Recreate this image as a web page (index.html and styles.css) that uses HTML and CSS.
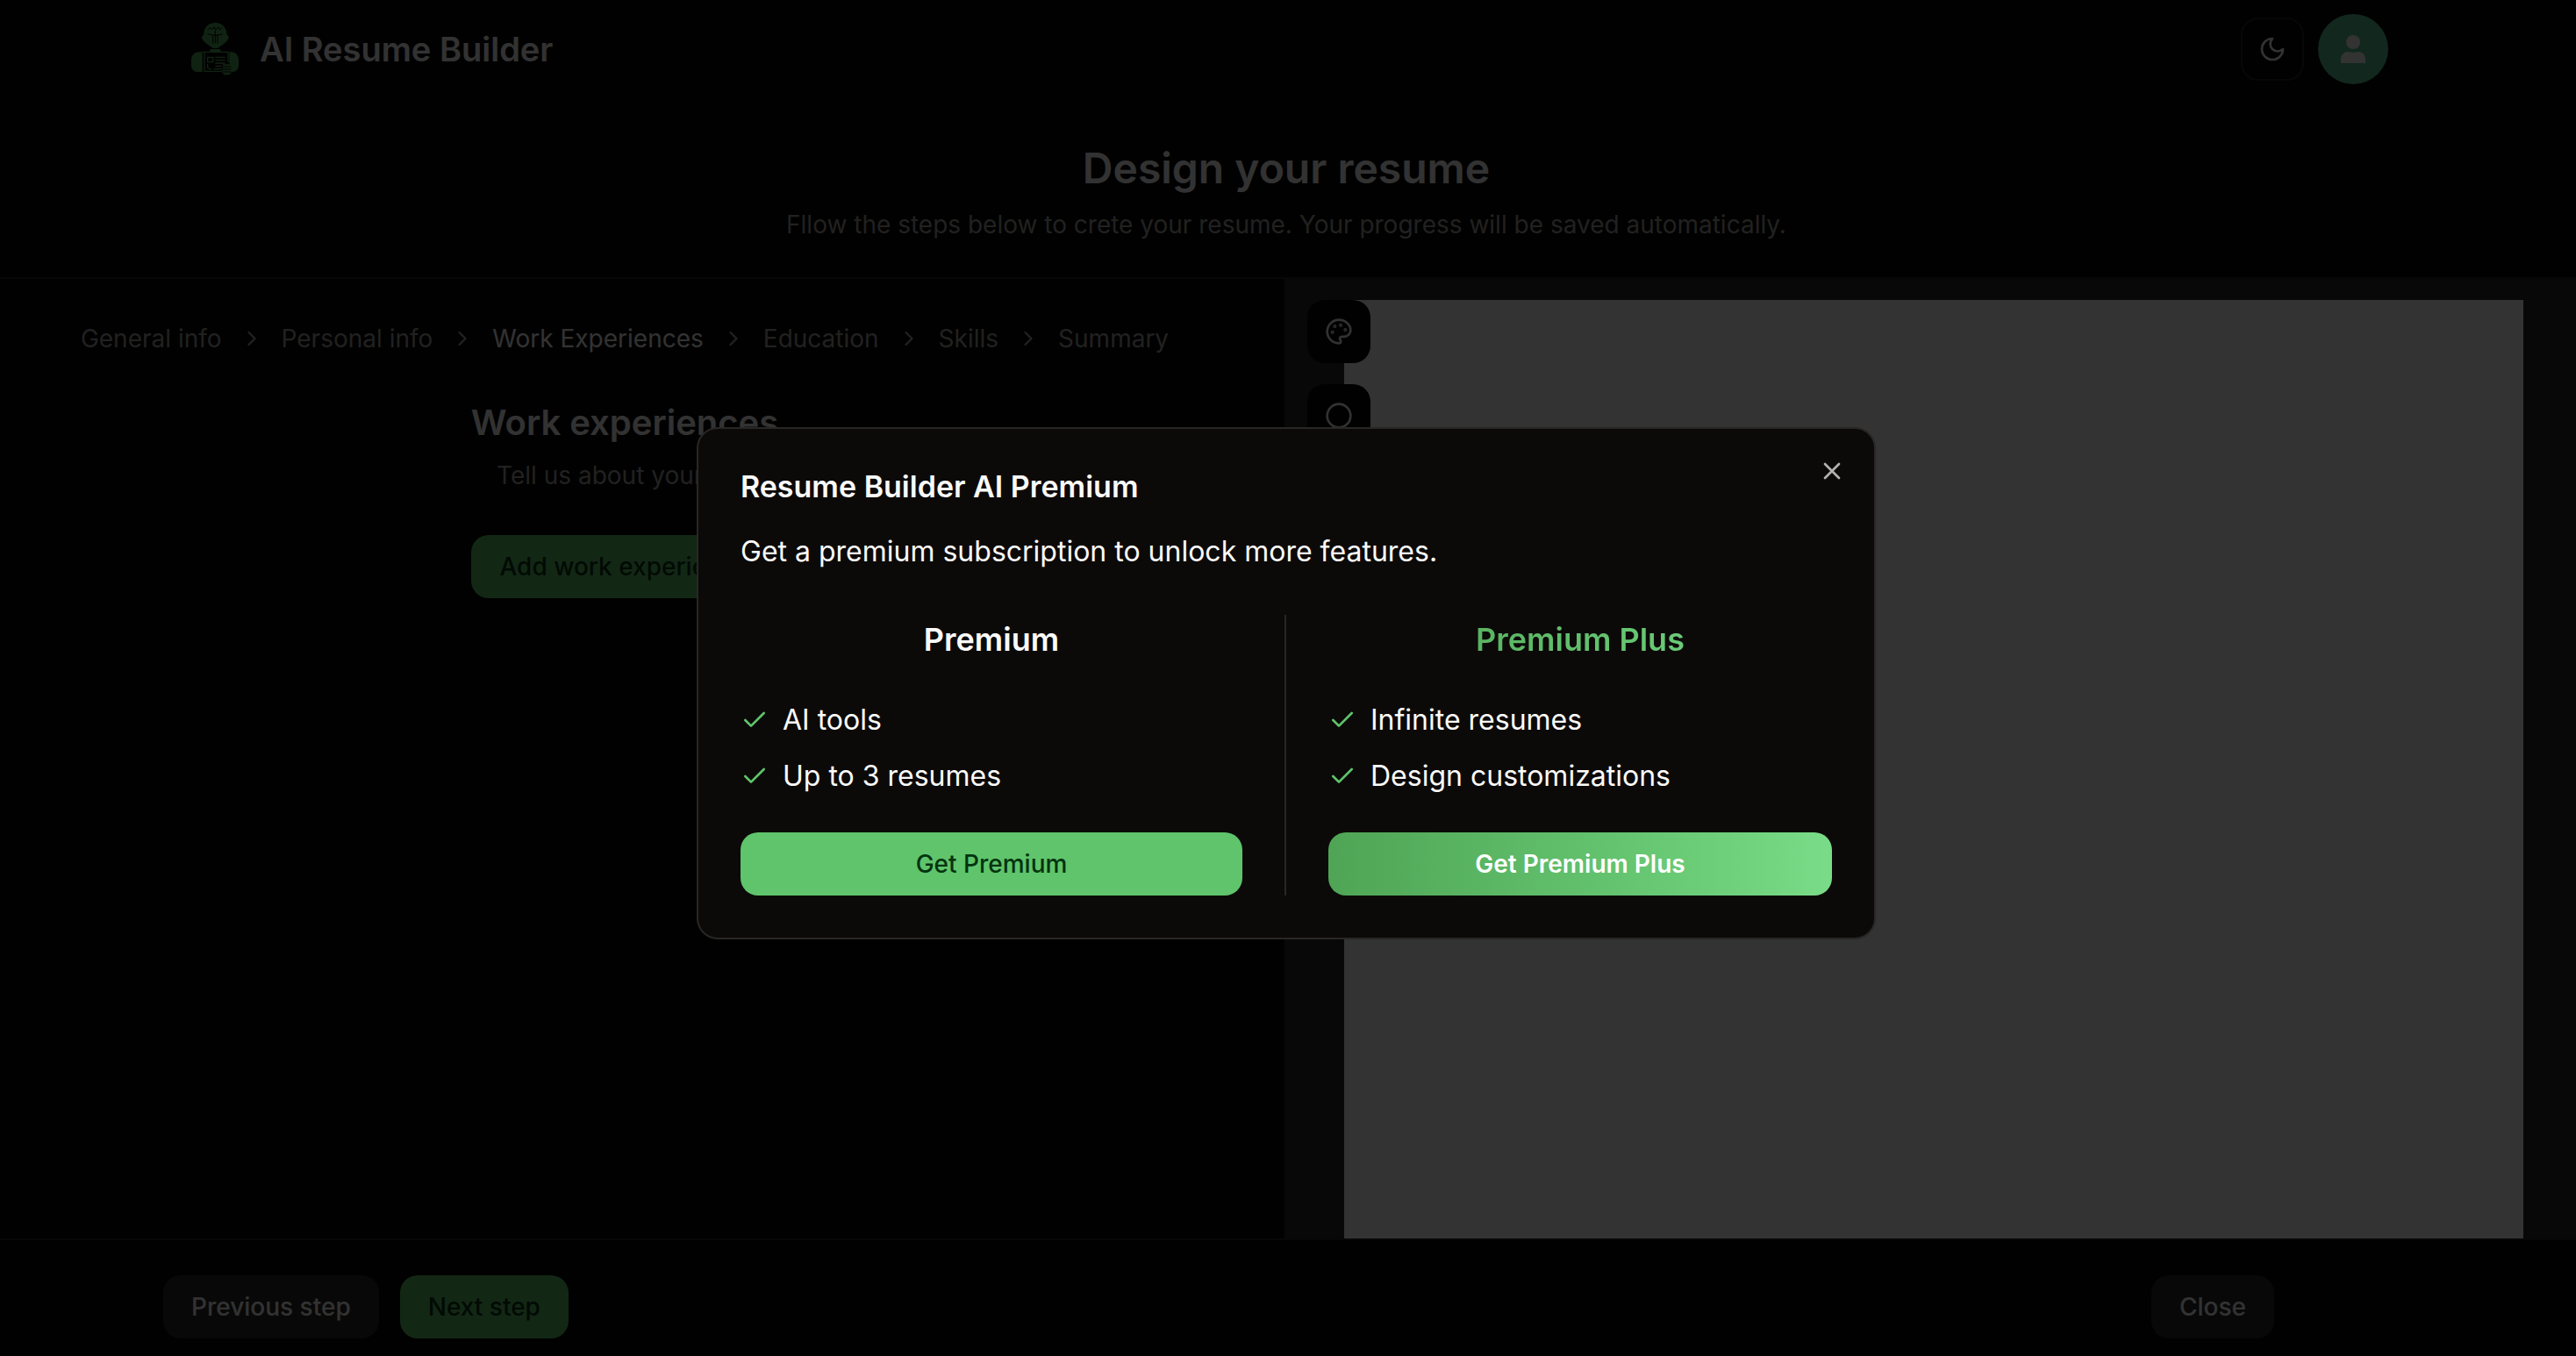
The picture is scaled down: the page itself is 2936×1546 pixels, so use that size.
FILE: index.html
```html
<!DOCTYPE html>
<html lang="en">
<head>
<meta charset="utf-8">
<meta name="viewport" content="width=device-width, initial-scale=1">
<title>Design your resume</title>
<link rel="stylesheet" href="styles.css">
</head>
<body>
<div class="app">
  <header class="topbar">
    <div class="container topbar-inner">
      <a class="brand" href="#">
        <svg class="brand-logo" viewBox="0 0 162 180" aria-hidden="true">
          <path class="fill" d="M82 0c24 0 38 16 39 38l8 12-8 14-18 14-14 9H75l-14-9-18-14-8-14 8-12C44 16 58 0 82 0z"/>
          <path class="fill" d="M64 90h36v10H64zM38 100v68H22C8 168 0 158 0 144v-16c0-18 12-28 28-28zM130 100h6c16 0 26 12 26 28v16c0 14-8 24-22 24h-4l-6-30z"/>
          <path class="line" d="M38 100h88v36M45 100v66h60M56 118h18v16H56zM56 140v14l12 6M82 118h34M82 128h34M82 138h34M82 148h22M76 158h28"/>
          <path class="fill" d="M108 142h28v30l-6 6h-18l-6-8z"/>
          <path class="cut" d="M108 150h28M108 159h28M108 168h28M56 24l8-8 6 8 8-10 6 10 8-10 6 10 8-8M56 38l16 4h20l16-4M74 42v28M90 42v28M82 26v44"/>
        </svg>
        <span>AI Resume Builder</span>
      </a>
      <div class="topbar-actions">
        <button class="icon-btn outline" type="button" aria-label="Toggle theme">
          <svg class="icon" viewBox="0 0 24 24"><path d="M12 3a6 6 0 0 0 9 9 9 9 0 1 1-9-9Z"/></svg>
        </button>
        <button class="avatar" type="button" aria-label="Account">
          <svg viewBox="0 0 28 32"><circle cx="14" cy="8" r="8"/><path d="M0 32v-4c0-6 4-9 8-9 2 0 3 1 6 1s4-1 6-1c4 0 8 3 8 9v4z"/></svg>
        </button>
      </div>
    </div>
  </header>

  <section class="intro">
    <h1>Design your resume</h1>
    <p>Fllow the steps below to crete your resume. Your progress will be saved automatically.</p>
  </section>

  <main class="workspace">
    <div class="editor">
      <nav aria-label="Steps">
        <ol class="steps">
          <li><a href="#">General info</a></li>
          <li><svg class="chevron" viewBox="0 0 24 24" aria-hidden="true"><path d="m9 18 6-6-6-6"/></svg><a href="#">Personal info</a></li>
          <li><svg class="chevron" viewBox="0 0 24 24" aria-hidden="true"><path d="m9 18 6-6-6-6"/></svg><span class="current" aria-current="step">Work Experiences</span></li>
          <li><svg class="chevron" viewBox="0 0 24 24" aria-hidden="true"><path d="m9 18 6-6-6-6"/></svg><a href="#">Education</a></li>
          <li><svg class="chevron" viewBox="0 0 24 24" aria-hidden="true"><path d="m9 18 6-6-6-6"/></svg><a href="#">Skills</a></li>
          <li><svg class="chevron" viewBox="0 0 24 24" aria-hidden="true"><path d="m9 18 6-6-6-6"/></svg><a href="#">Summary</a></li>
        </ol>
      </nav>
      <div class="form">
        <div class="form-head">
          <h2>Work experiences</h2>
          <p>Tell us about your job.</p>
        </div>
        <button class="btn primary" type="button">Add work experience</button>
      </div>
    </div>
    <div class="preview">
      <div class="preview-tools">
        <button class="icon-btn" type="button" aria-label="Change color">
          <svg class="icon" viewBox="0 0 24 24"><circle cx="13.5" cy="6.5" r=".5"/><circle cx="17.5" cy="10.5" r=".5"/><circle cx="8.5" cy="7.5" r=".5"/><circle cx="6.5" cy="12.5" r=".5"/><path d="M12 2C6.500 2 2 6.500 2 12s4.500 10 10 10c.926 0 1.648-.746 1.648-1.688 0-.437-.18-.835-.437-1.125-.29-.289-.438-.652-.438-1.125a1.640 1.640 0 0 1 1.668-1.668h1.996c3.051 0 5.555-2.503 5.555-5.554C21.965 6.012 17.461 2 12 2z"/></svg>
        </button>
        <button class="icon-btn" type="button" aria-label="Change border style">
          <svg class="icon" viewBox="0 0 24 24"><circle cx="12" cy="12" r="10"/></svg>
        </button>
      </div>
      <div class="paper"></div>
    </div>
  </main>

  <footer class="bottombar">
    <div class="container bottombar-inner">
      <button class="btn secondary" type="button">Previous step</button>
      <button class="btn primary" type="button">Next step</button>
      <button class="btn secondary close-editor" type="button">Close</button>
    </div>
  </footer>
</div>

<div class="overlay">
  <div class="dialog" role="dialog" aria-modal="true" aria-labelledby="dialog-title">
    <button class="dialog-close" type="button" aria-label="Close dialog">
      <svg class="icon" viewBox="0 0 24 24"><path d="M18 6 6 18M6 6l12 12"/></svg>
    </button>
    <h2 class="dialog-title" id="dialog-title">Resume Builder AI Premium</h2>
    <p class="dialog-text">Get a premium subscription to unlock more features.</p>
    <div class="plans">
      <section class="plan">
        <h3>Premium</h3>
        <ul>
          <li><svg class="icon check" viewBox="0 0 24 24" aria-hidden="true"><path d="M20 6 9 17l-5-5"/></svg>AI tools</li>
          <li><svg class="icon check" viewBox="0 0 24 24" aria-hidden="true"><path d="M20 6 9 17l-5-5"/></svg>Up to 3 resumes</li>
        </ul>
        <button class="btn primary" type="button">Get Premium</button>
      </section>
      <section class="plan">
        <h3 class="gradient-text">Premium Plus</h3>
        <ul>
          <li><svg class="icon check" viewBox="0 0 24 24" aria-hidden="true"><path d="M20 6 9 17l-5-5"/></svg>Infinite resumes</li>
          <li><svg class="icon check" viewBox="0 0 24 24" aria-hidden="true"><path d="M20 6 9 17l-5-5"/></svg>Design customizations</li>
        </ul>
        <button class="btn plus" type="button">Get Premium Plus</button>
      </section>
    </div>
  </div>
</div>
</body>
</html>
```

FILE: styles.css
```css
:root {
  --page: #050505;
  --bg: #0c0a09;
  --fg: #fafaf9;
  --muted: #a6a3a0;
  --line: #292725;
  --secondary: #292828;
  --primary: #5fc46b;
  --on-primary: #05330f;
  --gradient: linear-gradient(to right, #4fa555, #65c571 60%, #7adc88);
  --gutter: 4px;
}

* { box-sizing: border-box; }

body {
  margin: 0;
  background: var(--page);
  color: var(--fg);
  font: 28px/40px Inter, "Liberation Sans", sans-serif;
}

h1, h2, h3, p, ul, ol { margin: 0; padding: 0; }
ul, ol { list-style: none; }
a { color: inherit; text-decoration: none; }
button { font: inherit; color: inherit; border: 0; background: none; cursor: pointer; }

.app { display: flex; flex-direction: column; min-height: 100vh; }

.container {
  width: 100%;
  max-width: 2560px;
  margin: 0 auto;
}

.icon {
  display: block;
  width: 32px;
  height: 32px;
  flex: none;
  fill: none;
  stroke: currentColor;
  stroke-width: 2;
  stroke-linecap: round;
  stroke-linejoin: round;
}

.btn {
  height: 72px;
  padding: 0 32px;
  border-radius: 20px;
  font-weight: 500;
}
.primary { background: var(--primary); color: var(--on-primary); }
.secondary { background: var(--secondary); }
.plus { background: var(--gradient); color: #fff; font-weight: 600; }

.icon-btn {
  display: grid;
  place-items: center;
  width: 72px;
  height: 72px;
  padding: 0;
  border-radius: 20px;
  background: var(--page);
}
.outline { border: 2px solid var(--line); }

/* Top bar */
.topbar { padding-right: var(--gutter); }
.topbar-inner {
  display: flex;
  align-items: center;
  justify-content: space-between;
  padding: 16px 24px;
}
.brand {
  display: flex;
  align-items: center;
  gap: 24px;
  padding-left: 8px;
  font-size: 38px;
  font-weight: 600;
}
.brand-logo { width: 54px; height: 60px; }
.brand-logo .fill { fill: #50ab5a; }
.brand-logo .line { fill: none; stroke: #50ab5a; stroke-width: 4; }
.brand-logo .cut { fill: none; stroke: var(--page); stroke-width: 3; }
.topbar-actions { display: flex; align-items: center; gap: 16px; }
.avatar {
  display: grid;
  place-items: center;
  width: 80px;
  height: 80px;
  padding: 0;
  border-radius: 50%;
  background: #5ac294;
}
.avatar svg { width: 28px; height: 32px; fill: #fff; }

/* Page intro */
.intro {
  display: flex;
  flex-direction: column;
  gap: 12px;
  padding: 48px var(--gutter) 40px 0;
  border-bottom: 2px solid var(--line);
  text-align: center;
}
.intro h1 { font-size: 48px; line-height: 64px; font-weight: 600; }
.intro p, .form-head p { color: var(--muted); }

/* Workspace */
.workspace {
  flex: 1;
  display: grid;
  grid-template-columns: calc(50% - var(--gutter)) 1fr;
}
.editor {
  display: flex;
  flex-direction: column;
  gap: 48px;
  padding: 48px 64px 24px 24px;
}
.steps, .steps li { display: flex; align-items: center; gap: 20px; }
.steps { justify-content: center; color: var(--muted); }
.steps .current { color: var(--fg); }
.chevron {
  width: 28px;
  height: 28px;
  fill: none;
  stroke: currentColor;
  stroke-width: 2;
  stroke-linecap: round;
  stroke-linejoin: round;
}
.form {
  display: flex;
  flex-direction: column;
  align-items: center;
  gap: 48px;
}
.form-head {
  display: flex;
  flex-direction: column;
  gap: 12px;
  text-align: center;
}
.form-head h2 { font-size: 40px; line-height: 56px; font-weight: 600; }

.preview {
  position: relative;
  display: flex;
  padding: 24px 60px 0 68px;
  background: var(--secondary);
}
.paper { flex: 1; background: #fff; }
.preview-tools {
  position: absolute;
  top: 24px;
  left: 26px;
  display: flex;
  flex-direction: column;
  gap: 24px;
}

/* Bottom bar */
.bottombar {
  padding: 40px var(--gutter) 20px 0;
  border-top: 2px solid var(--line);
}
.bottombar-inner { display: flex; gap: 24px; padding-right: 154px; }
.close-editor { margin-left: auto; }

/* Premium dialog */
.overlay {
  position: fixed;
  inset: 0;
  display: grid;
  place-items: center;
  padding: 12px var(--gutter) 0 0;
  background: rgba(0, 0, 0, 0.8);
}
.dialog {
  position: relative;
  width: 100%;
  max-width: 1344px;
  padding: 48px;
  border: 2px solid var(--line);
  border-radius: 24px;
  background: var(--bg);
  font-size: 32px;
  line-height: 48px;
}
.dialog-close {
  position: absolute;
  top: 32px;
  right: 32px;
  padding: 0;
  opacity: 0.7;
}
.dialog-title { font-size: 34px; line-height: 36px; font-weight: 600; }
.dialog-text { margin-top: 32px; }
.plans {
  display: grid;
  grid-template-columns: 1fr 1fr;
  margin-top: 48px;
}
.plan { display: flex; flex-direction: column; gap: 40px; }
.plan:first-child { padding-right: 48px; border-right: 2px solid var(--line); }
.plan:last-child { padding-left: 48px; }
.plan h3 {
  font-size: 36px;
  line-height: 56px;
  font-weight: 600;
  text-align: center;
}
.plan ul { display: flex; flex-direction: column; gap: 16px; }
.plan li { display: flex; align-items: center; gap: 16px; }
.plan .btn { font-size: 28px; }
.check { color: var(--primary); }
.gradient-text {
  background: var(--gradient);
  background-clip: text;
  -webkit-background-clip: text;
  color: transparent;
}
```
